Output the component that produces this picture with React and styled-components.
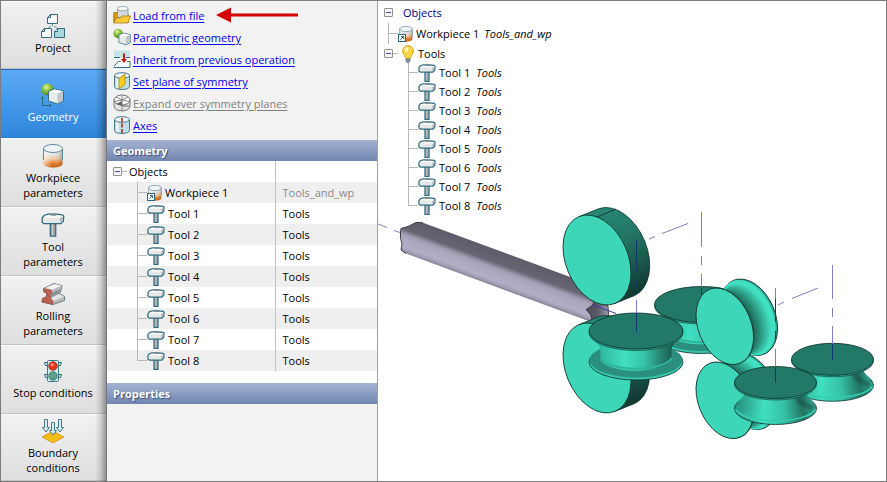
import React from "react";
import styled, { createGlobalStyle } from "styled-components";

const GlobalStyle = createGlobalStyle`
  * {
    box-sizing: border-box;
  }
  body {
    margin: 0;
    font-family: "Open Sans", "Noto Sans", sans-serif;
    font-size: 11px;
    line-height: 15px;
    color: #000;
  }
  button {
    font: inherit;
    color: inherit;
  }
`;

const Window = styled.div`
  display: grid;
  grid-template-columns: 106px 271px minmax(0, 1fr);
  min-height: 100vh;
  border: 1px solid #7d7d7d;
  background-color: #fff;
`;

/* Left navigation */

const Sidebar = styled.nav`
  position: relative;
  display: flex;
  flex-direction: column;
  border-right: 1px solid #77777b;
  background-color: #e8e8e8;
  &::after {
    content: "";
    position: absolute;
    top: 0;
    right: 0;
    bottom: 0;
    width: 11px;
    background: linear-gradient(to right, rgba(0, 0, 0, 0), rgba(0, 0, 0, 0.12) 50%, rgba(0, 0, 0, 0.36));
    pointer-events: none;
  }
`;

const StepButton = styled.button`
  display: flex;
  flex: 0 0 69px;
  flex-direction: column;
  align-items: center;
  justify-content: center;
  gap: 2px;
  padding: 0 1px 1px 0;
  border: 0;
  border-top: 1px solid ${props => (props.$active ? "#1d6cbd" : "#fafafa")};
  border-bottom: 1px solid ${props => (props.$active ? "#2a7ccc" : "#c3c3c3")};
  background: ${props =>
    props.$active
      ? "linear-gradient(#5caaf5, #2f86dc)"
      : "linear-gradient(#f1f1f1, #dedede)"};
  color: ${props => (props.$active ? "#fff" : "#000")};
  &:first-child {
    flex-basis: 68px;
  }
  &:last-child {
    flex: 1 0 67px;
  }
`;

const StepLabel = styled.span`
  max-width: 82px;
`;

/* Middle panel */

const Panel = styled.section`
  display: flex;
  flex-direction: column;
  border-right: 1px solid #a0a0a0;
  background-color: #f2f2f2;
`;

const Actions = styled.ul`
  margin: 0;
  padding: 3px 6px 4px;
  list-style: none;
`;

const ActionRow = styled.li`
  display: flex;
  align-items: center;
  gap: 2px;
  height: 22px;
`;

const ActionLink = styled.a`
  color: ${props => (props.$disabled ? "#808080" : "#0000f0")};
  text-decoration: underline;
  text-underline-offset: 2px;
  white-space: nowrap;
`;

const Arrow = styled.svg`
  margin-left: 10px;
`;

const PanelTitle = styled.h2`
  height: 21px;
  margin: 0;
  padding: 0 6px;
  background: linear-gradient(#a3b3d2, #7085b0);
  color: #fff;
  font-size: 11px;
  line-height: 21px;
  text-shadow: 1px 1px 1px #3f4f78;
`;

const ObjectsArea = styled.div`
  padding-bottom: 12px;
  background-color: #fff;
`;

const ObjectTable = styled.table`
  width: 100%;
  border-collapse: collapse;
  table-layout: fixed;
`;

const ObjectRow = styled.tr`
  height: 21px;
  &:nth-child(even) {
    background-color: #efefef;
  }
`;

const NameCell = styled.th`
  width: 168px;
  padding: 0;
  border-right: 1px solid #c0c0c0;
  font-weight: normal;
  text-align: left;
`;

const ValueCell = styled.td`
  padding: 0 7px;
  color: ${props => (props.$muted ? "#8a8a8a" : "#000")};
`;

const TreeItem = styled.div`
  display: flex;
  align-items: center;
  gap: ${props => props.$gap || 3}px;
  height: ${props => props.$height}px;
  padding-left: ${props => props.$indent}px;
  white-space: nowrap;
`;

const Branch = styled.span`
  width: ${props => props.$width || 10}px;
  height: 100%;
  margin-right: -${props => props.$gap || 3}px;
  background-image: linear-gradient(#b8b8b8, #b8b8b8),
    linear-gradient(#b8b8b8, #b8b8b8);
  background-repeat: no-repeat;
  background-position: 0 0, 0 50%;
  background-size: 1px ${props => (props.$last ? "50%" : "100%")}, 100% 1px;
`;

const Toggle = styled.button`
  display: flex;
  align-items: center;
  justify-content: center;
  width: 9px;
  height: 9px;
  padding: 0;
  border: 1px solid #919191;
  border-radius: 1px;
  background-color: #f4f4f4;
  &::before {
    content: "";
    width: 5px;
    height: 1px;
    background-color: #3c4fa0;
  }
`;

const Stub = styled.span`
  width: 5px;
  height: 1px;
  margin-right: -1px;
  margin-left: -3px;
  background-color: #b8b8b8;
`;

/* 3D view */

const Viewport = styled.main`
  position: relative;
`;

const Scene = styled.svg`
  position: absolute;
  top: 0;
  left: 0;
  width: 100%;
  height: 100%;
`;

const SceneTree = styled.div`
  position: relative;
  width: max-content;
`;

const RootName = styled.span`
  padding-left: 7px;
  color: #00008b;
`;

const Note = styled.em`
  padding-left: 3px;
`;

/* Icons */

const edge = "#2f6d80";

const ProjectIcon = () => (
  <svg width="24" height="24" viewBox="0 0 24 24" aria-hidden="true">
    <path d="M11.5 10v2M10 12l-4 3M13 12l4 3" stroke="#6f929e" fill="none" />
    <path d="M9.500 .5h7v9h-10v-6z" fill="#fff" stroke={edge} />
    <path d="M9.500 .5v3h-3" fill="none" stroke={edge} />
    <path d="M3.500 14.500h7v9h-10v-6z" fill="#fff" stroke={edge} />
    <path d="M3.500 14.500v3h-3" fill="none" stroke={edge} />
    <path d="M16.500 14.500h7v9h-10v-6z" fill="#a9d8dc" stroke={edge} />
    <path d="M16.500 14.500v3h-3" fill="#eef8f9" stroke={edge} />
  </svg>
);

const GeometryIcon = ({ size = 24, axes = true }) => (
  <svg width={size} height={size} viewBox={axes ? "0 0 24 24" : "0 0 23 22"} aria-hidden="true">
    <defs>
      <radialGradient id="ball" cx=".4" cy=".3" r=".7">
        <stop offset="0" stopColor="#e4f6a8" />
        <stop offset=".45" stopColor="#8fc43a" />
        <stop offset="1" stopColor="#4a8414" />
      </radialGradient>
    </defs>
    <circle cx="6.500" cy="6.500" r="6" fill="url(#ball)" />
    {axes && <path d="M1.500 23V14M0 16l1.500-2.500L3 16M1 22.500h9M8 21l2.500 1.500L8 24" fill="none" stroke={edge} />}
    <path d="M7.500 8.500l6-2.500 9 2v10l-6 3-9-3z" fill="#e9ecec" stroke={edge} />
    <path d="M8 8.700l5.500-2.200 8.500 1.800-5.500 2.200z" fill="#fff" />
    <path d="M16.500 10.500L22 8.300v9.400l-5.500 2.800z" fill="#c3c6c8" />
  </svg>
);

const WorkpieceIcon = ({ size = 24, shortcut }) => (
  <svg width={size} height={size} viewBox="0 0 24 24" aria-hidden="true">
    <defs>
      <linearGradient id="hot" x2="0" y2="1">
        <stop offset=".3" stopColor="#e4e6e8" />
        <stop offset=".55" stopColor="#f0c9a4" />
        <stop offset=".8" stopColor="#df7420" />
        <stop offset="1" stopColor="#c85c08" />
      </linearGradient>
      <linearGradient id="hotShade">
        <stop offset="0" stopColor="#fff" stopOpacity=".6" />
        <stop offset=".5" stopColor="#fff" stopOpacity="0" />
        <stop offset="1" stopColor="#602800" stopOpacity=".3" />
      </linearGradient>
    </defs>
    <path d="M2.500 4.500v15c0 5.300 19 5.300 19 0v-15z" fill="url(#hot)" />
    <path d="M2.500 4.500v15c0 5.300 19 5.300 19 0v-15z" fill="url(#hotShade)" />
    <path d="M2.500 16V4.500M21.500 16V4.500" stroke="#5e8c9c" fill="none" />
    <ellipse cx="12" cy="4.500" rx="9.500" ry="4" fill="#f1f4f5" stroke="#5e8c9c" />
    {shortcut && (
      <g>
        <rect x=".7" y="12.700" width="10.500" height="10.500" fill="#fff" stroke="#27647c" strokeWidth="1.500" />
        <path d="M3.500 20.500l4.500-4.500M4.500 15.700h4v4" fill="none" stroke="#27647c" strokeWidth="1.500" />
      </g>
    )}
  </svg>
);

const ToolIcon = ({ size = 24, line = 1.3 }) => (
  <svg width={size} height={size} viewBox="0 0 24 24" aria-hidden="true">
    <path d="M9.300 9h5.400v14.200H9.300z" fill="#a2a6a8" stroke={edge} strokeWidth={line} />
    <path d="M11.500 10v12.500" stroke="#c9cccd" />
    <path d="M1.200 5l1.800-2.500 4-1.300h8l6.500.6 1.300 1.200-.5 5.200-2.500 2.500H3l-1.800-1.500z" fill="#e6e7e7" stroke={edge} strokeWidth={line} />
    <path d="M2.500 4.800l2-2 5.500-.8 1 .8h10.500L18.500 4.800z" fill="#fafafa" />
    <path d="M9 1.500l1-1h5l1 1-1 1.300h-5z" fill="#7d8e95" />
    <path d="M19 5.500l2.800-2-.5 3.800-2.300 2.400z" fill="#b4b7b9" />
  </svg>
);

const RollingIcon = () => (
  <svg width="24" height="24" viewBox="0 0 24 24" aria-hidden="true">
    <path d="M2.500 6.500L13 1.500l8 2-1 5-1.500 3 5 3v4L12 22.500 1 20l.5-3.500 4-2V11l-3-1.500z" fill="#b9bbbc" stroke="#6f7f86" />
    <path d="M3 6.500L13.500 2l7 1.500-10 4.500z" fill="#f4f4f4" />
    <path d="M9 11.500l10-4-1 4-8 4z" fill="#8b8f92" />
    <path d="M10 16l8-4 5 2.500-11 4.500z" fill="#e3e4e4" />
    <path d="M3 6.500l7.500 1.500v3.500L9 13l1 4 2 2v3.500L1 20l.5-3.500 4-1.500.3-3.500L3 10z" fill="#b9604f" stroke="#9a4a3c" strokeWidth=".6" />
  </svg>
);

const StopIcon = () => (
  <svg width="24" height="24" viewBox="0 0 24 24" aria-hidden="true">
    <path d="M6 3.500H3.500l1 3H6M6 15.500H3.500l1 3H6M18 3.500h2.500l-1 3H18M18 15.500h2.500l-1 3H18" fill="#d5e9ec" stroke={edge} />
    <rect x="6.500" y="1.500" width="11" height="21" rx="1" fill="#d3e9ec" stroke="#3d7c8e" />
    <circle cx="12" cy="7" r="4.300" fill="#e8361c" stroke="#8b2414" strokeWidth=".7" />
    <circle cx="11" cy="5.700" r="1.500" fill="#ff9a80" />
    <circle cx="12" cy="17" r="4.300" fill="#5e9f8c" stroke="#3a7567" strokeWidth=".7" />
  </svg>
);

const BoundaryIcon = () => (
  <svg width="24" height="24" viewBox="0 0 24 24" aria-hidden="true">
    <path d="M12 12l11 6-11 6-11-6z" fill="#f7bb16" stroke="#c98a12" strokeWidth=".7" />
    {[
      [5, 0],
      [12, 3],
      [19, 0]
    ].map(([x, y]) => (
      <path key={x} d={`M${x - 1.5} ${y + 0.5}h3v8h2l-3.500 4.500-3.500-4.500h2z`} fill="#d9edf1" stroke={edge} strokeWidth=".9" />
    ))}
  </svg>
);

const LoadIcon = () => (
  <svg width="18" height="18" viewBox="0 0 18 18" aria-hidden="true">
    <path d="M.7 16.500V6.500h4l1.500 1.500h9v8.500z" fill="#d79a14" stroke="#9a6c10" strokeWidth=".7" />
    <path d="M4.500 3v8.500h10.500V3z" fill="#d2dadd" stroke="#7c99a4" strokeWidth=".8" />
    <ellipse cx="9.700" cy="2.700" rx="5.200" ry="2.200" fill="#f6f9fa" stroke="#7c99a4" strokeWidth=".8" />
    <path d="M.8 17l2.500-5h4l1.500-2h9l-3 7z" fill="#fac83a" stroke="#a87610" strokeWidth=".7" />
  </svg>
);

const InheritIcon = () => (
  <svg width="18" height="18" viewBox="0 0 18 18" aria-hidden="true">
    <path d="M1 .5h16v7H1z" fill="#c6e3e6" />
    <path d="M1 7.500h6M13 7.500h4" stroke={edge} />
    <path d="M5.500 11.500h11v6H.8v-2z" fill="#f4fafb" />
    <path d="M.5 17.500h16.500V11.500h-3M1 16l4.500-4.500h2" fill="none" stroke={edge} />
    <path d="M11 3.500v8" stroke="#c61c10" strokeWidth="2" />
    <path d="M8 9h6l-3 4z" fill="#c61c10" />
  </svg>
);

const Can = ({ children }) => (
  <svg width="18" height="18" viewBox="0 0 18 18" aria-hidden="true">
    <path d="M1.500 3.500v11c0 4 15 4 15 0v-11z" fill="#bcdfe5" stroke="#44798a" />
    <path d="M3 5.500v10l3 1v-10z" fill="#fff" opacity=".6" />
    <ellipse cx="9" cy="3.500" rx="7.500" ry="2.800" fill="#f0f8f9" stroke="#44798a" />
    {children}
  </svg>
);

const SymmetryIcon = () => (
  <Can>
    <path d="M6 6.500l6-4.500v10.500l-6 4.500z" fill="#f8cc20" stroke="#a88410" strokeWidth=".8" />
  </Can>
);

const ExpandIcon = () => (
  <svg width="18" height="18" viewBox="0 0 18 18" aria-hidden="true">
    <path d="M1 6v6c0 6.500 16 6.500 16 0V6z" fill="#e4e4e4" stroke="#747474" />
    <ellipse cx="9" cy="6" rx="8" ry="5" fill="#f5f5f5" stroke="#747474" />
    <path d="M9 1v16M1.500 7.500L9 6l7.500 1.500M3 3l6 3 6-3" fill="none" stroke="#747474" strokeWidth=".8" />
    <path d="M3 10l6-3v5z" fill="#666" />
    <path d="M9 12h7" stroke="#666" />
  </svg>
);

const AxesIcon = () => (
  <Can>
    <path d="M9 2v15" stroke="#c8201a" strokeWidth="1.600" strokeDasharray="4 1.500" />
  </Can>
);

const BulbIcon = () => (
  <svg width="15" height="18" viewBox="1 0 15 18" aria-hidden="true">
    <path d="M9 .6a5.500 5.500 0 0 0-5.500 5.500c0 3 2.700 4 3 7.200h5c.3-3.200 3-4.200 3-7.200A5.500 5.500 0 0 0 9 .6z" fill="#fbd542" stroke="#c99a1a" strokeWidth=".8" />
    <ellipse cx="7.500" cy="4.500" rx="2" ry="2.500" fill="#fff3b8" />
    <path d="M7 14h4v2l-1 1.500H8L7 16z" fill="#8d999e" stroke="#56676e" strokeWidth=".7" />
  </svg>
);

/* Scene parts */

const ink = "#0d2f29";
const face = "#3dd6b9";
const cap = "#227968";

// flat ellipse given by its half extents and skew, as svg radii and angle
const ellipseOf = (w, h, skew) => {
  const mid = (w * w + h * h) / 2;
  const r = Math.hypot((w * w - h * h) / 2, skew);
  return {
    rx: Math.sqrt(mid + r),
    ry: Math.sqrt(mid - r),
    angle: (Math.atan2(2 * skew, w * w - h * h) * 90) / Math.PI
  };
};

const Disc = ({ x, y }) => {
  const e = ellipseOf(34, 45, 442);
  const [dx, dy] = [20, -8];
  const [tx, ty] = [17.7, 43.5];
  return (
    <g stroke={ink} strokeWidth=".8">
      <path
        d={`M${x - tx} ${y - ty}l${dx} ${dy}A${e.rx} ${e.ry} ${e.angle} 0 1 ${x + tx + dx} ${y + ty + dy}l${-dx} ${-dy}z`}
        fill="url(#discSide)"
      />
      <ellipse rx={e.rx} ry={e.ry} transform={`translate(${x} ${y}) rotate(${e.angle})`} fill={face} />
      <path d={`M${x} ${y - 43}l19-8`} />
    </g>
  );
};

const grooveSteps = [0, 1, 2, 3, 4, 5, 6, 7, 8, 9, 10, 11];

const GroovedDisc = ({ x, y }) => {
  const e = ellipseOf(28.8, 38.3, 319);
  const turn = (cx, cy) => `translate(${cx} ${cy}) rotate(${e.angle})`;
  return (
    <g>
      <ellipse rx={e.rx} ry={e.ry} transform={turn(x + 24, y - 9)} fill="#2fae97" stroke={ink} strokeWidth=".8" />
      <ellipse rx={e.rx - 0.5} ry={e.ry - 0.5} transform={turn(x + 22.5, y - 8.5)} fill="#41e0c3" />
      {grooveSteps.map(i => (
        <ellipse
          key={i}
          rx={e.rx - 3 - i * 0.5}
          ry={e.ry - 2.5 - i * 0.5}
          transform={turn(x + 20 - i * 1.1, y - 7 + i * 0.4)}
          fill={`rgb(${62 - i * 3}, ${216 - i * 11}, ${188 - i * 10})`}
        />
      ))}
      <ellipse rx={e.rx} ry={e.ry} transform={turn(x + 1, y)} fill="#1b5c50" />
      <ellipse rx={e.rx} ry={e.ry} transform={turn(x, y)} fill={face} stroke={ink} strokeWidth=".8" />
    </g>
  );
};

const FlangedSpool = ({ x, y }) => (
  <g>
    <ellipse cx={x} cy={y + 31} rx="47" ry="18" fill="#37c8ad" stroke={ink} strokeWidth=".8" />
    <ellipse cx={x} cy={y + 29} rx="46.500" ry="17.500" fill="#2a8f7c" />
    <path d={`M${x - 38} ${y + 12}q2 4 2.500 8v9a36 13 0 0 0 71 0v-9q0-4 2.500-8z`} fill="url(#neck)" />
    <path d={`M${x - 35.5} ${y + 27}a36 13 0 0 0 71 0`} fill="none" stroke="#2fb59d" strokeWidth="2" />
    <ellipse cx={x} cy={y + 1.5} rx="47" ry="18" fill="#2fae97" stroke={ink} strokeWidth=".6" />
    <ellipse cx={x} cy={y} rx="47" ry="18" fill={cap} stroke={ink} strokeWidth=".8" />
  </g>
);

const GroovedSpool = ({ x, y }) => (
  <g>
    <ellipse cx={x} cy={y + 26} rx="41" ry="16" fill="url(#groove)" stroke={ink} strokeWidth=".8" />
    <path d={`M${x - 31} ${y + 11}q-1 4-7 8l4 10h68l4-10q-6-4-7-8z`} fill="url(#groove)" />
    <path d={`M${x + 24} ${y + 13}q5 8 14 10l-2 5q-13-4-17-13z`} fill="#174a40" opacity=".6" filter="url(#soft)" />
    <path d={`M${x - 40} ${y + 27}a41 14.500 0 0 0 80 0`} fill="none" stroke="#37cdb1" strokeWidth="1.500" />
    <ellipse cx={x} cy={y + 1.5} rx="41" ry="16" fill="#2fae97" stroke={ink} strokeWidth=".6" />
    <ellipse cx={x} cy={y} rx="41" ry="16" fill={cap} stroke={ink} strokeWidth=".8" />
  </g>
);

const Mill = () => (
  <Scene viewBox="378 1 508 480" preserveAspectRatio="xMinYMin meet" role="img" aria-label="Rolling mill model">
    <defs>
      <linearGradient id="discSide" x1="0" y1="0" x2=".35" y2="1">
        <stop offset="0" stopColor="#2a8b79" />
        <stop offset=".5" stopColor="#227564" />
        <stop offset=".85" stopColor="#174f44" />
        <stop offset="1" stopColor="#123d35" />
      </linearGradient>
      <linearGradient id="neck">
        <stop offset="0" stopColor="#2fb39b" />
        <stop offset=".35" stopColor="#40dfc2" />
        <stop offset=".6" stopColor="#37c5ab" />
        <stop offset=".82" stopColor="#278572" />
        <stop offset="1" stopColor="#19564a" />
      </linearGradient>
      <linearGradient id="groove">
        <stop offset="0" stopColor="#27907d" />
        <stop offset=".35" stopColor="#40dfc2" />
        <stop offset=".6" stopColor="#36c2a8" />
        <stop offset=".85" stopColor="#237463" />
        <stop offset="1" stopColor="#2fa994" />
      </linearGradient>
      <linearGradient id="bar" gradientUnits="userSpaceOnUse" x1="423" y1="222.700" x2="411" y2="255.300">
        <stop offset="0" stopColor="#5f5c6a" />
        <stop offset=".36" stopColor="#686573" />
        <stop offset=".5" stopColor="#a19eb4" />
        <stop offset=".62" stopColor="#aba8c0" />
        <stop offset=".84" stopColor="#b1aec7" />
        <stop offset=".94" stopColor="#9f9cb2" />
        <stop offset="1" stopColor="#868397" />
      </linearGradient>
      <linearGradient id="barEnd">
        <stop offset="0" stopColor="#4c4a56" />
        <stop offset=".5" stopColor="#5b5966" />
        <stop offset="1" stopColor="#9a97ac" />
      </linearGradient>
      <filter id="soft">
        <feGaussianBlur stdDeviation="1.500" />
      </filter>
    </defs>

    <path
      d="M400.500 232l.5-3.500 7-2 8-4 7 .2L608 291v30l-14 2-188-69.500-5-3.500 1-6-1-6z"
      fill="url(#bar)"
    />
    <path d="M406 253.500l-5-3.500 1-6-1.500-6v-6l.5-3.500 7-2 8-4 7 .2" fill="none" stroke="#2c2a33" strokeWidth=".9" />
    <path d="M595 300l13 6 .7 10.500-7 2-9 4-2-7.500-4.500-5.500 6-4z" fill="url(#barEnd)" stroke="#2c2a33" strokeWidth=".8" />

    <Disc x={597} y={368} />
    <Disc x={597} y={260} />
    <FlangedSpool x={701.5} y={304.5} />
    <GroovedDisc x={724.8} y={400.3} />
    <GroovedDisc x={724.8} y={326.3} />
    <GroovedSpool x={832.5} y={359.3} />
    <GroovedSpool x={775.5} y={382.5} />
    <FlangedSpool x={636} y={331} />

    <g fill="none" stroke="#7f7fcb">
      <path d="M378 224l9 3.500M394 230.500l6 2" />
      <path d="M593 305l23 8.500" stroke="#3c3ca8" />
      <path d="M649 239l6-2.500M662 233.500l26-10" />
      <path d="M778 305l6-3M792 298.500l26-10.500" />
      <path d="M701.500 212v35M701.500 256v9M701.500 274v13M775.500 288v11M832.500 265v34M832.500 308v9M832.500 326v18M636.500 300v13M775.500 349v18" />
    </g>
    <path
      d="M636.500 240v33M636.500 282v9M636.500 313v19M701.500 287v8M775.500 299v23M775.500 331v8M775.500 367v16M832.500 344v16"
      stroke="#14356f"
      fill="none"
    />
  </Scene>
);

/* Data */

const steps = [
  { label: "Project", icon: <ProjectIcon /> },
  { label: "Geometry", icon: <GeometryIcon />, active: true },
  { label: "Workpiece parameters", icon: <WorkpieceIcon /> },
  { label: "Tool parameters", icon: <ToolIcon /> },
  { label: "Rolling parameters", icon: <RollingIcon /> },
  { label: "Stop conditions", icon: <StopIcon /> },
  { label: "Boundary conditions", icon: <BoundaryIcon /> }
];

const actions = [
  { label: "Load from file", icon: <LoadIcon />, arrow: true },
  { label: "Parametric geometry", icon: <GeometryIcon size={18} axes={false} /> },
  { label: "Inherit from previous operation", icon: <InheritIcon /> },
  { label: "Set plane of symmetry", icon: <SymmetryIcon /> },
  { label: "Expand over symmetry planes", icon: <ExpandIcon />, disabled: true },
  { label: "Axes", icon: <AxesIcon /> }
];

const tools = [1, 2, 3, 4, 5, 6, 7, 8];

export default function App() {
  return (
    <>
      <GlobalStyle />
      <Window>
        <Sidebar>
          {steps.map(step => (
            <StepButton key={step.label} $active={step.active}>
              {step.icon}
              <StepLabel>{step.label}</StepLabel>
            </StepButton>
          ))}
        </Sidebar>

        <Panel>
          <Actions>
            {actions.map(action => (
              <ActionRow key={action.label}>
                {action.icon}
                <ActionLink href="#" $disabled={action.disabled} aria-disabled={action.disabled}>
                  {action.label}
                </ActionLink>
                {action.arrow && (
                  <Arrow width="82" height="16" viewBox="0 0 82 16" aria-hidden="true">
                    <path d="M0 8L15 .5v6h67v3H15v6z" fill="#d40000" />
                  </Arrow>
                )}
              </ActionRow>
            ))}
          </Actions>

          <PanelTitle>Geometry</PanelTitle>
          <ObjectsArea>
            <ObjectTable>
              <tbody>
                <ObjectRow>
                  <NameCell scope="row">
                    <TreeItem $height={21} $indent={6}>
                      <Toggle aria-label="Collapse Objects" />
                      <Stub />
                      Objects
                    </TreeItem>
                  </NameCell>
                  <ValueCell />
                </ObjectRow>
                <ObjectRow>
                  <NameCell scope="row">
                    <TreeItem $height={21} $indent={30} $gap={2}>
                      <Branch $gap={2} />
                      <WorkpieceIcon size={16} shortcut />
                      Workpiece 1
                    </TreeItem>
                  </NameCell>
                  <ValueCell $muted>Tools_and_wp</ValueCell>
                </ObjectRow>
                {tools.map(n => (
                  <ObjectRow key={n}>
                    <NameCell scope="row">
                      <TreeItem $height={21} $indent={30}>
                        <Branch $last={n === tools.length} />
                        <ToolIcon size={18} line={1.6} />
                        Tool {n}
                      </TreeItem>
                    </NameCell>
                    <ValueCell>Tools</ValueCell>
                  </ObjectRow>
                ))}
              </tbody>
            </ObjectTable>
          </ObjectsArea>
          <PanelTitle>Properties</PanelTitle>
        </Panel>

        <Viewport>
          <Mill />
          <SceneTree>
            <TreeItem $height={22} $indent={6}>
              <Toggle aria-label="Collapse Objects" />
              <RootName>Objects</RootName>
            </TreeItem>
            <TreeItem $height={21} $indent={10} $gap={2}>
              <Branch $gap={2} />
              <WorkpieceIcon size={16} shortcut />
              Workpiece 1
              <Note>Tools_and_wp</Note>
            </TreeItem>
            <TreeItem $height={19} $indent={6}>
              <Toggle aria-label="Collapse Tools" />
              <Stub />
              <BulbIcon />
              Tools
            </TreeItem>
            {tools.map(n => (
              <TreeItem key={n} $height={19} $indent={30}>
                <Branch $last={n === tools.length} />
                <ToolIcon size={18} line={1.6} />
                <span>Tool {n}</span>
                <Note>Tools</Note>
              </TreeItem>
            ))}
          </SceneTree>
        </Viewport>
      </Window>
    </>
  );
}
